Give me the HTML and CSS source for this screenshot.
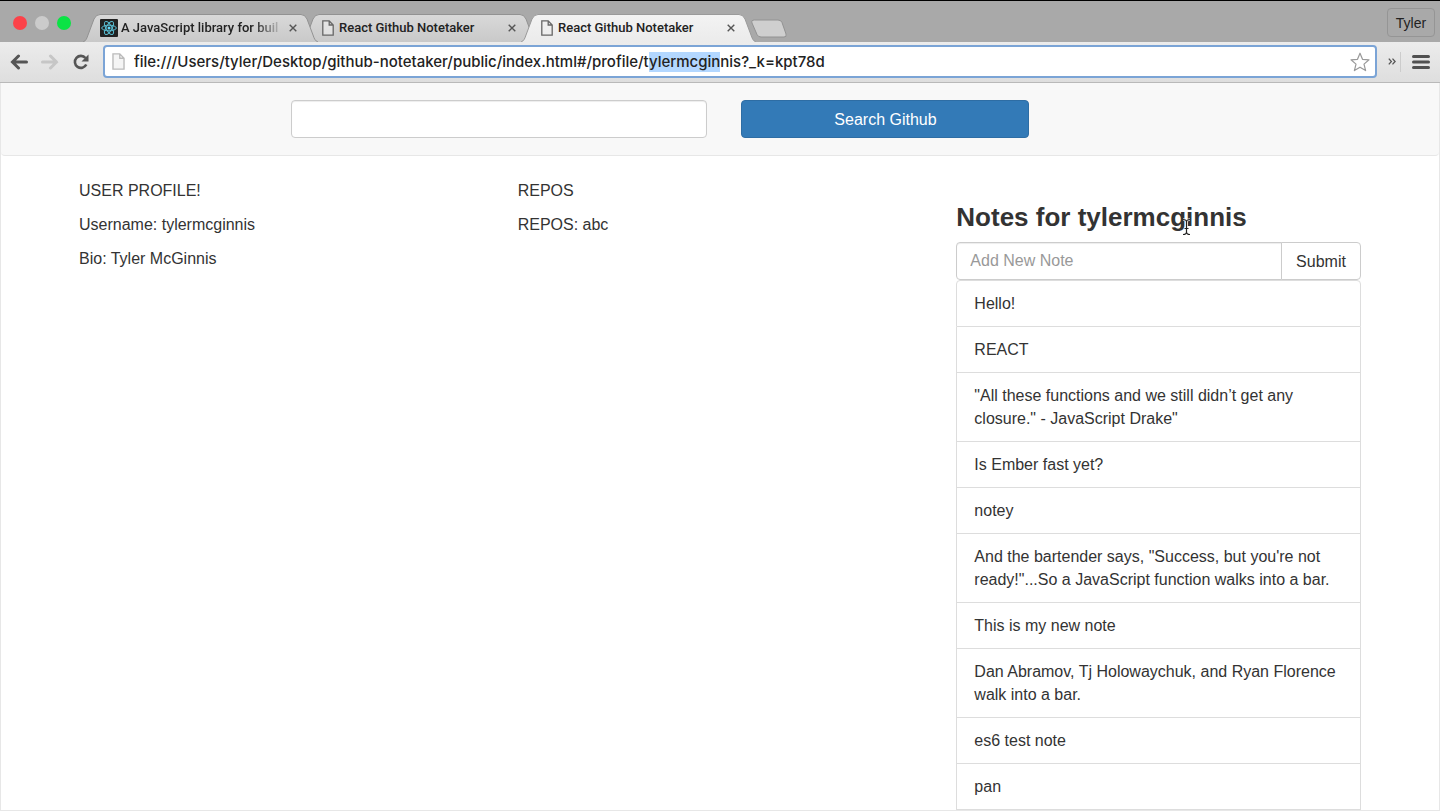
FILE: index.html
```html
<!DOCTYPE html>
<html lang="en">
<head>
<meta charset="utf-8">
<title>React Github Notetaker</title>
<link rel="stylesheet" href="styles.css">
</head>
<body>
<svg class="defs" aria-hidden="true">
  <defs>
    <linearGradient id="tab-back" x1="0" y1="0" x2="0" y2="1"><stop offset="0" stop-color="#d9d9d9"/><stop offset="1" stop-color="#c9c9c9"/></linearGradient>
    <linearGradient id="tab-front" x1="0" y1="0" x2="0" y2="1"><stop offset="0" stop-color="#f3f3f3"/><stop offset="1" stop-color="#ebebeb"/></linearGradient>
    <symbol id="doc" viewBox="0 0 12 16"><path d="M.8.8h6.4l4 4.2v10.2H.8zM7.2.8V5h4" fill="#eee" fill-opacity=".6" stroke="currentColor" stroke-width="1.3"/></symbol>
    <symbol id="cross" viewBox="0 0 8 8"><path d="M.7.7l6.6 6.6M7.3.7L.7 7.3" stroke="#555" stroke-width="1.4" fill="none"/></symbol>
  </defs>
</svg>
<header class="browser">
  <div class="tab-strip">
    <div class="lights"><span class="light red"></span><span class="light gray"></span><span class="light green"></span></div>
    <nav class="tabs" aria-label="Tabs">
      <div class="tab tab-first">
        <svg class="shape" viewBox="0 0 235 28" preserveAspectRatio="none"><path d="M0 28C3 27 4 24 5 21L11 5Q13 .5 17 .5H218Q222 .5 224 5L230 21C231 24 232 27 235 28" fill="url(#tab-back)" stroke="#929292"/></svg>
        <svg class="react" viewBox="0 0 18 18"><rect width="18" height="18" rx="1" fill="#222"/><g fill="none" stroke="#58bcd1"><ellipse cx="9" cy="9" rx="7.3" ry="2.8"/><ellipse cx="9" cy="9" rx="7.3" ry="2.8" transform="rotate(60 9 9)"/><ellipse cx="9" cy="9" rx="7.3" ry="2.8" transform="rotate(120 9 9)"/></g><circle cx="9" cy="9" r="1.5" fill="#61dafb"/></svg>
        <span class="title fade">A JavaScript library for buil</span>
        <button class="close" aria-label="Close tab"><svg><use href="#cross"/></svg></button>
      </div>
      <div class="tab">
        <svg class="shape" viewBox="0 0 235 28" preserveAspectRatio="none"><path d="M0 28C3 27 4 24 5 21L11 5Q13 .5 17 .5H218Q222 .5 224 5L230 21C231 24 232 27 235 28" fill="url(#tab-back)" stroke="#929292"/></svg>
        <svg class="doc"><use href="#doc"/></svg>
        <span class="title">React Github Notetaker</span>
        <button class="close" aria-label="Close tab"><svg><use href="#cross"/></svg></button>
      </div>
      <div class="tab tab-active">
        <svg class="shape" viewBox="0 0 235 28" preserveAspectRatio="none"><path d="M0 28C3 27 4 24 5 21L11 5Q13 .5 17 .5H218Q222 .5 224 5L230 21C231 24 232 27 235 28" fill="url(#tab-front)" stroke="#9a9a9a"/></svg>
        <svg class="doc"><use href="#doc"/></svg>
        <span class="title">React Github Notetaker</span>
        <button class="close" aria-label="Close tab"><svg><use href="#cross"/></svg></button>
      </div>
      <button class="new-tab" aria-label="New tab"><svg viewBox="0 0 36 19"><path d="M3.5 1H27Q30 1 31 3.500L35 15Q36 18 33 18H10Q7 18 6 15.500L1 4Q0 1 3.500 1z" fill="#cfcfcf" stroke="#929292"/></svg></button>
    </nav>
    <button class="user">Tyler</button>
  </div>
  <div class="toolbar">
    <button class="tool" aria-label="Back"><svg viewBox="0 0 18 16"><path d="M16.500 8H3M8.500 2L2.500 8l6 6" fill="none" stroke="#555" stroke-width="3" stroke-linecap="round"/></svg></button>
    <button class="tool" aria-label="Forward"><svg viewBox="0 0 18 16"><path d="M1.500 8h14M9.500 2l6 6-6 6" fill="none" stroke="#c6c6c6" stroke-width="3" stroke-linecap="round"/></svg></button>
    <button class="tool" aria-label="Reload"><svg viewBox="0 0 18 16"><path d="M13.500 4A6 6 0 1 0 14.300 10.500" fill="none" stroke="#555" stroke-width="2.600"/><path d="M16.500.5v7h-7z" fill="#555"/></svg></button>
    <div class="address">
      <svg class="page-icon"><use href="#doc"/></svg>
      <input class="url" id="url" type="text" aria-label="Address" spellcheck="false" value="file:///Users/tyler/Desktop/github-notetaker/public/index.html#/profile/tylermcginnis?_k=kpt78d">
      <button class="star" aria-label="Bookmark"><svg viewBox="0 0 20 20"><path d="M10 1.200l2.500 6.100 6.500.5-5 4.300 1.600 6.500L10 15.200l-5.600 3.400L6 12.100 1 7.800l6.500-.5z" fill="#fff" stroke="#999" stroke-width="1.200" stroke-linejoin="round"/></svg></button>
    </div>
    <button class="more" aria-label="More extensions"><svg viewBox="0 0 8 7"><path d="M.8.600L3.400 3.500.8 6.400M4.500.600L7.100 3.500 4.500 6.400" fill="none" stroke="#555" stroke-width="1.300"/></svg></button>
    <button class="menu" aria-label="Menu"><svg viewBox="0 0 18 16"><path d="M1.500 2.500h15M1.500 8h15M1.500 13.500h15" stroke="#505050" stroke-width="3" stroke-linecap="round"/></svg></button>
  </div>
</header>
<div class="page">
  <div class="navbar">
    <form class="search">
      <input class="field" type="text" aria-label="Github username">
      <button class="primary" type="button">Search Github</button>
    </form>
  </div>
  <main class="container">
    <section><p>USER PROFILE!</p><p>Username: tylermcginnis</p><p>Bio: Tyler McGinnis</p></section>
    <section><p>REPOS</p><p>REPOS: abc</p></section>
    <section>
      <h3>Notes for <span class="pointed">tylermcginnis<svg class="cursor" viewBox="0 0 9 18"><path d="M1 1.500Q4.500 1.500 4.500 4Q4.500 1.500 8 1.500M4.500 3v12M2.500 10.500h4M1 16.500Q4.500 16.500 4.500 14Q4.500 16.500 8 16.500" fill="none" stroke="#fff" stroke-opacity=".8" stroke-width="2.600"/><path d="M1 1.500Q4.500 1.500 4.500 4Q4.500 1.500 8 1.500M4.500 3v12M2.500 10.500h4M1 16.500Q4.500 16.500 4.500 14Q4.500 16.500 8 16.500" fill="none" stroke="#222" stroke-width="1.200"/></svg></span></h3>
      <form class="add">
        <input type="text" placeholder="Add New Note" aria-label="Add New Note">
        <button type="button">Submit</button>
      </form>
      <ul class="notes">
        <li>Hello!</li>
        <li>REACT</li>
        <li>"All these functions and we still didn’t get any closure." - JavaScript Drake"</li>
        <li>Is Ember fast yet?</li>
        <li>notey</li>
        <li>And the bartender says, "Success, but you're not ready!"...So a JavaScript function walks into a bar.</li>
        <li>This is my new note</li>
        <li>Dan Abramov, Tj Holowaychuk, and Ryan Florence walk into a bar.</li>
        <li>es6 test note</li>
        <li>pan</li>
      </ul>
    </section>
  </main>
</div>
<script src="script.js"></script>
</body>
</html>
```
FILE: styles.css
```css
* { box-sizing: border-box; }
body { margin: 0; height: 100vh; display: flex; flex-direction: column; overflow: hidden; background: #fff; color: #333; font: 16px/23px "Liberation Sans", Arial, sans-serif; }
button { font: inherit; border: 0; padding: 0; background: none; color: inherit; }
svg { display: block; }
.defs { position: absolute; width: 0; height: 0; }

.browser { flex: none; font-family: Roboto, Inter, sans-serif; color: #222; }
.tab-strip { display: flex; height: 42px; border-top: 1px solid #000; background: #a9a9a9; }
.lights { display: flex; gap: 8px; width: 83px; padding: 15px 0 0 13px; }
.light { width: 14px; height: 14px; border-radius: 50%; }
.red { background: #fc4249; }
.gray { background: #cbcbcb; }
.green { background: #0be345; }
.tabs { display: flex; flex: 1; min-width: 0; align-items: flex-end; }
.tab { position: relative; display: flex; align-items: center; width: 235px; height: 28px; margin-right: -16px; padding: 0 21px 0 20px; line-height: 18px; }
.tab > * { position: relative; }
.tab .shape { position: absolute; inset: 0; width: 100%; height: 100%; }
.tab-first { z-index: 1; padding-left: 17px; }
.tab-active { z-index: 2; }
.doc { width: 12px; height: 16px; margin-right: 5px; color: #666; }
.react { flex: none; width: 18px; height: 18px; margin-right: 3px; }
.title { flex: 1; min-width: 0; overflow: hidden; white-space: nowrap; font-size: 13px; font-weight: 500; }
.fade { margin-right: 2px; mask-image: linear-gradient(to right, #000 80%, transparent 98%); }
.close svg { width: 8px; height: 8px; }
.new-tab { margin: 0 0 4px 11px; }
.new-tab svg { width: 36px; height: 19px; }
.user { width: 48px; height: 29px; margin: 7px 5px 0 0; border: 1px solid #959595; border-radius: 4px; font: 14px/18px "Liberation Sans", Arial, sans-serif; }

.toolbar { display: flex; align-items: center; height: 41px; padding: 1px 10px 2px; border-bottom: 1px solid #b9b9b9; background: linear-gradient(#ececec, #dedede); }
.tool { width: 31px; }
.tool svg { width: 18px; height: 16px; }
.address { display: flex; flex: 1; align-items: center; min-width: 0; height: 33px; padding: 0 5px 0 7px; border: 2px solid #7ba4d6; border-radius: 4px; background: #fff; }
.page-icon { width: 13px; height: 17px; margin-right: 9px; color: #bbb; }
.url { flex: 1; min-width: 0; height: 20px; padding: 0; border: 0; outline: 0; background: none; color: #222; font: 500 15px/20px Inter, Roboto, sans-serif; }
.url::selection { background: #b3d7ff; color: #222; }
.star svg { width: 20px; height: 20px; }
.more { display: flex; align-items: center; height: 20px; margin-left: 11px; padding-right: 4px; border-right: 1px solid #ccc; }
.more svg { width: 8px; height: 7px; }
.menu { margin-left: 11px; }
.menu svg { width: 18px; height: 16px; }

.page { flex: 1; min-height: 0; overflow: hidden; border: 1px solid #e7e7e7; border-top: 0; }
.navbar { padding: 17px 0; border: 1px solid #e7e7e7; border-width: 0 0 1px; border-radius: 0 0 4px 4px; background: #f8f8f8; }
.search { display: grid; grid-template-columns: 13fr 9fr; gap: 34px; width: 738px; max-width: 80%; margin-left: 20.2%; }
.field, .add input { min-width: 0; height: 38px; padding: 0 13px; border: 1px solid #ccc; border-radius: 4px; outline: 0; background: #fff; box-shadow: inset 0 1px 1px #00000013; font: inherit; }
.primary { height: 38px; border: 1px solid #2e6da4; border-radius: 4px; background: #337ab7; color: #fff; }
.container { display: grid; grid-template-columns: repeat(3, 1fr); gap: 34px; max-width: 1282px; margin: 0 auto; padding-top: 23px; }
p { margin: 0 0 11px; }
h3 { margin: 23px 0 10px; font: bold 26px/30px "Liberation Sans", Arial, sans-serif; white-space: nowrap; }
.pointed { position: relative; }
.cursor { position: absolute; right: 56px; top: 16px; width: 9px; height: 18px; }
.add { display: flex; }
.add input { flex: 1; border-radius: 4px 0 0 4px; }
.add input::placeholder { color: #999; }
.add button { width: 80px; height: 38px; margin-left: -1px; border: 1px solid #ccc; border-radius: 0 4px 4px 0; background: #fff; }
.notes { margin: 0; padding: 0; list-style: none; }
.notes li { padding: 11px 17px; border: 1px solid #ddd; border-top: 0; }
.notes li:first-child { border-top: 1px solid #ddd; border-radius: 4px 4px 0 0; }
```
FILE: script.js
```js
const url = document.getElementById("url");
const start = url.value.indexOf("ylermcgin");
url.focus();
url.setSelectionRange(start, start + "ylermcgin".length);
```
